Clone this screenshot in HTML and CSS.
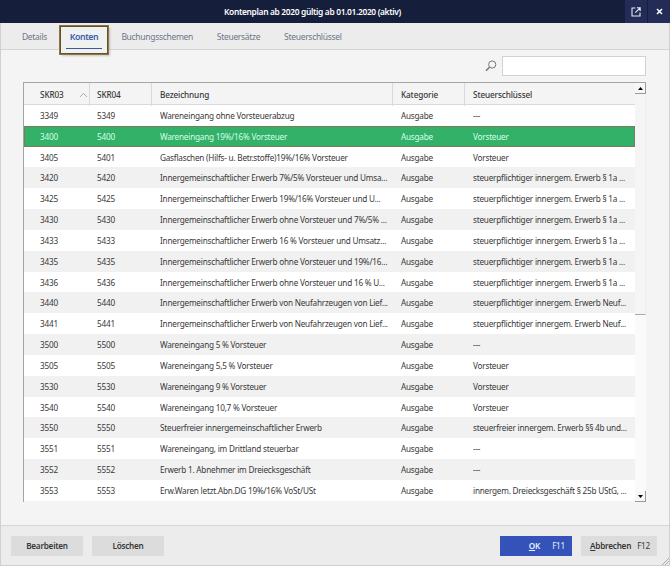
FILE: index.html
```html
<!DOCTYPE html>
<html lang="de">
<head>
<meta charset="utf-8">
<title>Kontenplan</title>
<link rel="stylesheet" href="styles.css">
</head>
<body>
<div class="window">
  <header class="titlebar">
    <h1>Kontenplan ab 2020 gültig ab 01.01.2020 (aktiv)</h1>
    <div class="window-buttons">
      <button aria-label="Öffnen"><svg width="10" height="10" viewBox="0 0 10 10" fill="none" stroke="#e8ebf5" stroke-width="1.1"><path d="M4.5 1H1v8h8V5.5M6 .8h3.2V4M9 1 4.3 5.7"/></svg></button>
      <button aria-label="Schließen"><svg width="7" height="7" viewBox="0 0 7 7" fill="none" stroke="#fff" stroke-width="1.5"><path d="m1 1 5 5M6 1 1 6"/></svg></button>
    </div>
  </header>
  <nav class="tabs">
    <a>Details</a><a class="active">Konten</a><a>Buchungsschemen</a><a>Steuersätze</a><a>Steuerschlüssel</a>
  </nav>
  <main>
    <div class="search">
      <svg width="12" height="12" viewBox="0 0 12 12" fill="none" stroke="#777"><circle cx="7.2" cy="4.5" r="3.6"/><path d="M4.5 7.2 1 10.7" stroke-width="1.6"/></svg>
      <input aria-label="Suche">
    </div>
    <div class="grid">
      <div class="table">
        <div class="row head"><span>SKR03<svg width="9" height="6" viewBox="0 0 9 6" fill="none" stroke="#aaa"><path d="m1 5 3.5-3.7L8 5"/></svg></span><span>SKR04</span><span>Bezeichnung</span><span>Kategorie</span><span>Steuerschlüssel</span></div>
        <div class="row"><span>3349</span><span>5349</span><span>Wareneingang ohne Vorsteuerabzug</span><span>Ausgabe</span><span>---</span></div>
        <div class="row selected"><span>3400</span><span>5400</span><span>Wareneingang 19%/16% Vorsteuer</span><span>Ausgabe</span><span>Vorsteuer</span></div>
        <div class="row"><span>3405</span><span>5401</span><span>Gasflaschen (Hilfs- u. Betr.stoffe)19%/16% Vorsteuer</span><span>Ausgabe</span><span>Vorsteuer</span></div>
        <div class="row"><span>3420</span><span>5420</span><span>Innergemeinschaftlicher Erwerb 7%/5% Vorsteuer und Umsa...</span><span>Ausgabe</span><span>steuerpflichtiger innergem. Erwerb § 1a ...</span></div>
        <div class="row"><span>3425</span><span>5425</span><span>Innergemeinschaftlicher Erwerb 19%/16% Vorsteuer und U...</span><span>Ausgabe</span><span>steuerpflichtiger innergem. Erwerb § 1a ...</span></div>
        <div class="row"><span>3430</span><span>5430</span><span>Innergemeinschaftlicher Erwerb ohne Vorsteuer und 7%/5% ...</span><span>Ausgabe</span><span>steuerpflichtiger innergem. Erwerb § 1a ...</span></div>
        <div class="row"><span>3433</span><span>5433</span><span>Innergemeinschaftlicher Erwerb 16 % Vorsteuer und Umsatz...</span><span>Ausgabe</span><span>steuerpflichtiger innergem. Erwerb § 1a ...</span></div>
        <div class="row"><span>3435</span><span>5435</span><span>Innergemeinschaftlicher Erwerb ohne Vorsteuer und 19%/16...</span><span>Ausgabe</span><span>steuerpflichtiger innergem. Erwerb § 1a ...</span></div>
        <div class="row"><span>3436</span><span>5436</span><span>Innergemeinschaftlicher Erwerb ohne Vorsteuer und 16 % U...</span><span>Ausgabe</span><span>steuerpflichtiger innergem. Erwerb § 1a ...</span></div>
        <div class="row"><span>3440</span><span>5440</span><span>Innergemeinschaftlicher Erwerb von Neufahrzeugen von Lief...</span><span>Ausgabe</span><span>steuerpflichtiger innergem. Erwerb Neuf...</span></div>
        <div class="row"><span>3441</span><span>5441</span><span>Innergemeinschaftlicher Erwerb von Neufahrzeugen von Lief...</span><span>Ausgabe</span><span>steuerpflichtiger innergem. Erwerb Neuf...</span></div>
        <div class="row"><span>3500</span><span>5500</span><span>Wareneingang 5 % Vorsteuer</span><span>Ausgabe</span><span>---</span></div>
        <div class="row"><span>3505</span><span>5505</span><span>Wareneingang 5,5 % Vorsteuer</span><span>Ausgabe</span><span>Vorsteuer</span></div>
        <div class="row"><span>3530</span><span>5530</span><span>Wareneingang 9 % Vorsteuer</span><span>Ausgabe</span><span>Vorsteuer</span></div>
        <div class="row"><span>3540</span><span>5540</span><span>Wareneingang 10,7 % Vorsteuer</span><span>Ausgabe</span><span>Vorsteuer</span></div>
        <div class="row"><span>3550</span><span>5550</span><span>Steuerfreier innergemeinschaftlicher Erwerb</span><span>Ausgabe</span><span>steuerfreier innergem. Erwerb §§ 4b und...</span></div>
        <div class="row"><span>3551</span><span>5551</span><span>Wareneingang, im Drittland steuerbar</span><span>Ausgabe</span><span>---</span></div>
        <div class="row"><span>3552</span><span>5552</span><span>Erwerb 1. Abnehmer im Dreiecksgeschäft</span><span>Ausgabe</span><span>---</span></div>
        <div class="row"><span>3553</span><span>5553</span><span>Erw.Waren letzt.Abn.DG 19%/16% VoSt/USt</span><span>Ausgabe</span><span>innergem. Dreiecksgeschäft § 25b UStG, ...</span></div>
      </div>
      <div class="scrollbar">
        <div class="step"><svg width="5" height="3" viewBox="0 0 5 3"><path d="M0 3 2.5 0 5 3z"/></svg></div>
        <div class="thumb"></div>
        <div class="track"></div>
        <div class="step"><svg width="5" height="3" viewBox="0 0 5 3"><path d="M0 0h5L2.5 3z"/></svg></div>
      </div>
    </div>
  </main>
  <footer>
    <button class="btn">Bearbeiten</button>
    <button class="btn">Löschen</button>
    <button class="btn primary"><span><u>O</u>K</span><kbd>F11</kbd></button>
    <button class="btn cancel"><span><u>A</u>bbrechen</span><kbd>F12</kbd></button>
    <svg class="grip" width="7" height="7" viewBox="0 0 7 7" stroke="#aaa"><path d="M0 7 7 0M3 7l4-4"/></svg>
  </footer>
</div>
</body>
</html>
```
FILE: styles.css
```css
* { box-sizing: border-box; }
body { margin: 0; font-family: "Noto Sans", sans-serif; font-size: 8.2px; color: #383838; }
button, input, kbd { font: inherit; color: inherit; border: 0; padding: 0; margin: 0; }
.window { height: 566px; display: flex; flex-direction: column; background: #f4f4f4; border: 1px solid #d0d0d0; border-top: 0; }
.titlebar { height: 23px; background: #151e3b; color: #fff; display: grid; grid-template-columns: 1fr 45px; margin: 0 -1px; flex: none; }
h1 { margin: 0; font-size: 8.4px; font-weight: 600; line-height: 23px; text-align: center; letter-spacing: -0.33px; white-space: nowrap; }
.window-buttons { display: flex; gap: 1px; }
.window-buttons button { width: 22px; background: #222c56; display: grid; place-items: center; }
.tabs { height: 27px; flex: none; display: flex; background: #ececec; border-bottom: 1px solid #d5d5d5; padding-left: 9px; font-size: 8.5px; letter-spacing: -0.3px; color: #6c7688; }
.tabs a { line-height: 27px; padding: 0 11.9px; white-space: nowrap; }
.tabs a:first-child { width: 50px; flex: none; }
.tabs .active { height: 28px; margin: 3px 1.5px 0 0; width: 48px; flex: none; padding: 0 5px; line-height: 20px; border: 1px solid #625321; outline: 0.5px solid #8d7547; color: #3a5da8; font-weight: 600; font-size: 8.8px; letter-spacing: -0.4px; text-align: center; box-shadow: 2px 2px 2px #0003; background: #f0f2f2; z-index: 1; }
.tabs .active::after { content: ""; display: block; height: 1px; background: #4254a8; margin-top: 1px; }
main { flex: 1; padding: 6px 23px 0 22px; }
.search { display: flex; justify-content: flex-end; align-items: center; gap: 5px; height: 20px; }
.search input { width: 144px; height: 20px; border: 1px solid #d2d2d2; background: #fff; }
.grid { margin-top: 6px; height: 420px; display: flex; border-top: 1px solid #a5a5a5; border-left: 1px solid #a5a5a5; }
.table { flex: none; width: 611px; letter-spacing: -0.22px; }
.row { height: 20.84px; display: grid; grid-template-columns: 66px 62px 241px 72px 1fr; align-items: center; background: #fff; }
.row:nth-child(odd) { background: #f1f1f1; }
.row span { white-space: nowrap; padding-left: 8px; }
.row span:first-child { padding-left: 16px; }
.row span:nth-child(2) { padding-left: 7px; }
.row.head { height: 22px; background: #f4f4f4; border-bottom: 1px solid #d9d9d9; font-weight: 500; align-items: stretch; line-height: 23px; letter-spacing: -0.12px; }
.head span { border-right: 1px solid #d9d9d9; }
.head span:first-child { display: flex; align-items: center; justify-content: space-between; padding-right: 1px; }
.head span:last-child { border: 0; }
.row.selected { background: #33b169; color: #d5ffe6; box-shadow: inset 0 0 0 1px #7a7d59; }
.scrollbar { flex: 1; display: flex; flex-direction: column; background: #fafafa; }
.step { height: 11px; background: #f7f7f7; border-right: 1px solid #999; border-bottom: 1px solid #999; display: grid; place-items: center; }
.thumb { height: 221px; background: #f5f5f5; border-bottom: 1px solid #aaa; border-right: 1px solid #eee; }
.track { flex: 1; }
footer { height: 40px; flex: none; display: flex; align-items: center; background: #ececec; border-top: 1px solid #d5d5d5; padding: 0 12px 0 10px; position: relative; letter-spacing: -0.25px; }
.btn { width: 72px; height: 20px; background: #dcdcdc; font-weight: 600; margin-right: 9px; letter-spacing: inherit; }
.primary, .cancel { display: flex; align-items: center; justify-content: flex-end; gap: 12px; padding-right: 7px; }
.primary { margin-left: auto; background: #3452b7; color: #e7f3ff; }
.cancel { width: 76px; margin-right: 0; gap: 6px; }
kbd { font-weight: 400; }
.grip { position: absolute; right: 0; bottom: 0; }
```
